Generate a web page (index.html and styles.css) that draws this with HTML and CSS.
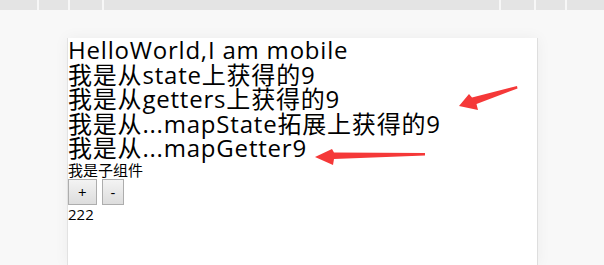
FILE: index.html
```html
<!DOCTYPE html>
<html lang="zh-CN">
<head>
    <meta charset="UTF-8">
    <meta name="viewport" content="width=device-width, initial-scale=1.0">
    <title>vuex demo</title>
    <link rel="stylesheet" href="styles.css">
</head>
<body>

<div class="ruler">
    <span class="tick" style="left: 37px"></span>
    <span class="tick" style="left: 68px"></span>
    <span class="tick" style="left: 102px"></span>
    <span class="tick" style="left: 499px"></span>
    <span class="tick" style="left: 534px"></span>
    <span class="tick" style="left: 565px"></span>
</div>

<div class="stage">
    <div class="screen">
        <div id="app">
            <div class="big">HelloWorld,I am mobile</div>
            <div class="big">我是从state上获得的9</div>
            <div class="big">我是从getters上获得的9</div>
            <div class="big">我是从...mapState拓展上获得的9</div>
            <div class="big">我是从...mapGetter9</div>
            <div class="child">
                <div>我是子组件</div>
                <div class="btns">
                    <button class="btn">+</button>
                    <button class="btn">-</button>
                </div>
                <div>222</div>
            </div>
        </div>
    </div>
</div>

<!-- 截图上画的红色箭头 -->
<svg class="marks" width="604" height="265" viewBox="0 0 604 265">
    <path d="M517 86 L472 97.5 L469 94 L459 106 L478 110 L476.5 104 L517.5 88.5 Z" fill="#f53838"/>
    <path d="M425 153 L334 152.5 L332 149 L315 157 L333 165 L334 159 L425 155.5 Z" fill="#f53838"/>
</svg>

</body>
</html>
```

FILE: styles.css
```css
body {
    margin: 0;
    background-color: #f8f8f8;
    height: 265px;
    overflow: hidden;
    position: relative;
}

.ruler {
    position: relative;
    height: 10px;
    background-color: #e4e4e4;
}

.ruler .tick {
    position: absolute;
    top: 0;
    width: 2px;
    height: 10px;
    background-color: #f7f7f7;
}

.stage {
    padding: 28px 0 0 67px;
}

.screen {
    width: 469px;
    height: 227px;
    background-color: white;
    border-left: 1px solid #e2e2e2;
    border-right: 1px solid #dedede;
    box-shadow: 0 0 14px rgba(0, 0, 0, 0.05);
}

#app {
    font-family: "Open Sans", "Noto Sans CJK SC", sans-serif;
    color: black;
}

.big {
    font-size: 24px;
    line-height: 24.5px;
    letter-spacing: 0.8px;
}

.child {
    font-size: 15px;
    line-height: 18px;
}

.btns {
    display: flex;
    gap: 5px;
}

.btn {
    font-family: "Open Sans", sans-serif;
    font-size: 15px;
    line-height: 18px;
    height: 26px;
    padding: 0 9px;
    border: 1px solid #adadad;
    background: linear-gradient(#f3f3f3, #dddddd);
    color: black;
}

.btn:last-child {
    padding: 0 8px;
}

.marks {
    position: absolute;
    left: 0;
    top: 0;
    pointer-events: none;
}
```
